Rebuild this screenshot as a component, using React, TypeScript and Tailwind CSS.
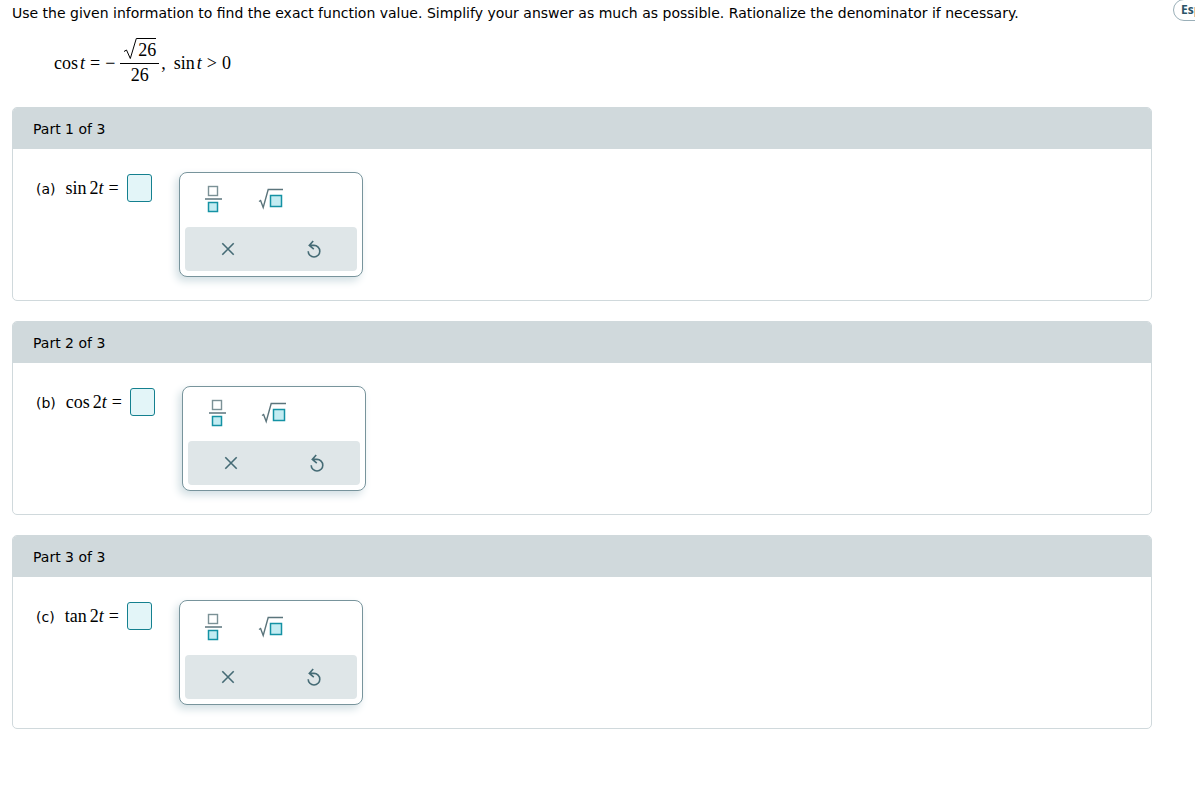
import { useState } from "react";

const parts = [
  { id: "a", fn: "sin" },
  { id: "b", fn: "cos" },
  { id: "c", fn: "tan" },
];

function FractionIcon() {
  return (
    <svg width="18" height="28" viewBox="0 0 18 28" fill="none" aria-hidden="true">
      <rect x="4.5" y="1.5" width="9" height="9" stroke="#7b9196" strokeWidth="1.4" />
      <path d="M1 14H18" stroke="#5b757c" strokeWidth="1.5" />
      <rect x="4.5" y="17.5" width="9" height="9" fill="#c3ecf2" stroke="#1492a4" strokeWidth="1.5" />
    </svg>
  );
}

function RootIcon() {
  return (
    <svg width="26" height="22" viewBox="0 0 26 22" fill="none" aria-hidden="true">
      <path d="M1 13.5L2.6 12.5L5.2 19.5L10.2 1.5H25" stroke="#5b757c" strokeWidth="1.4" />
      <rect x="12.5" y="7.5" width="11" height="11" fill="#c3ecf2" stroke="#1492a4" strokeWidth="1.5" />
    </svg>
  );
}

function ClearIcon() {
  return (
    <svg width="14" height="14" viewBox="0 0 14 14" fill="none" aria-hidden="true">
      <path d="M1.3 1.3L12.7 12.7M12.7 1.3L1.3 12.7" stroke="#456b75" strokeWidth="1.6" />
    </svg>
  );
}

function UndoIcon() {
  return (
    <svg width="14" height="18" viewBox="0 0 14 18" fill="none" aria-hidden="true">
      <path d="M6.2 1L2.3 5.4L6.8 9.2M2.3 5.4H7A5.8 5.8 0 1 1 1.2 11.2" stroke="#456b75" strokeWidth="1.6" />
    </svg>
  );
}

function Given() {
  return (
    <div className="mt-4 flex h-12 items-center pl-[42px] font-['Liberation_Serif',serif] text-[18px] leading-6">
      <span>cos</span>
      <i className="ml-[2px]">t</i>
      <span className="ml-[5px]">=</span>
      <span className="ml-[5px]">−</span>
      <span className="ml-[5px] inline-flex flex-col items-center">
        <span className="flex h-[25px] w-[39px] items-end border-b border-black pb-[2px] pl-1">
          <svg width="14" height="23" viewBox="0 0 14 23" fill="none" aria-hidden="true">
            <path d="M0 13.5L2.5 12L6.3 20.5L12.3 .5H14" stroke="#000" />
          </svg>
          <span className="h-[23px] border-t border-black leading-[22px]">26</span>
        </span>
        <span className="h-6 leading-[22px]">26</span>
      </span>
      <span className="ml-[2px]">,</span>
      <span className="ml-2">sin</span>
      <i className="ml-[2px]">t</i>
      <span className="ml-[5px]">&gt;</span>
      <span className="ml-[5px]">0</span>
    </div>
  );
}

function Part({ index, id, fn }: { index: number; id: string; fn: string }) {
  const [value, setValue] = useState("");
  const field = `answer-${id}`;
  return (
    <section className="overflow-hidden rounded-[5px] border border-[#d0d9dc] bg-white">
      <h2 className="bg-[#d0d9dc] px-5 pt-[11px] pb-[10px] text-sm leading-5">
        Part {index} of {parts.length}
      </h2>
      <div className="flex items-start px-[23px] py-[23px]">
        <label htmlFor={field} className="mt-[6px] flex items-baseline leading-5">
          <span className="text-sm leading-5">({id})</span>
          <span className="ml-[10px] flex items-baseline font-['Liberation_Serif',serif] text-[18px] leading-5">
            <span>{fn}</span>
            <span className="ml-[3px]">2</span>
            <i>t</i>
            <span className="ml-[5px]">=</span>
          </span>
        </label>
        <input
          id={field}
          value={value}
          onChange={(e) => setValue(e.target.value)}
          className="mt-[2px] ml-2 h-7 w-[25px] rounded-[3px] border border-[#14808f] bg-[#e3f5f8] text-center text-sm outline-none"
        />
        <div className="ml-[27px] w-[184px] rounded-lg border border-[#78949c] bg-white p-[5px] shadow-[-3px_4px_8px_#d2dfe3]">
          <div className="grid h-[49px] grid-cols-3 pb-[7px]">
            <button type="button" aria-label="Fraction" className="flex items-center justify-center" onClick={() => setValue(value + "/")}>
              <FractionIcon />
            </button>
            <button type="button" aria-label="Square root" className="flex items-center justify-center" onClick={() => setValue(value + "√")}>
              <RootIcon />
            </button>
          </div>
          <div className="grid h-11 grid-cols-2 rounded-[4px] bg-[#dfe6e8]">
            <button type="button" aria-label="Clear" className="flex items-center justify-center" onClick={() => setValue("")}>
              <ClearIcon />
            </button>
            <button type="button" aria-label="Undo" className="flex items-center justify-center" onClick={() => setValue(value.slice(0, -1))}>
              <UndoIcon />
            </button>
          </div>
        </div>
      </div>
    </section>
  );
}

export default function App() {
  return (
    <div className="flex min-h-screen bg-white font-['DejaVu_Sans',sans-serif] text-black">
      <main className="min-w-0 flex-1 pb-8 pl-3">
        <p className="pt-[3px] text-sm leading-5">
          Use the given information to find the exact function value. Simplify your answer as much as possible. Rationalize the denominator if necessary.
        </p>
        <Given />
        <div className="mt-5 flex flex-col gap-5">
          {parts.map((p, i) => (
            <Part key={p.id} index={i + 1} id={p.id} fn={p.fn} />
          ))}
        </div>
      </main>
      <aside className="w-[43px] shrink-0 overflow-hidden pl-[21px]">
        <button type="button" className="-mt-px block h-[22px] rounded-full border border-[#9aafb8] px-[7px] font-['Open_Sans',sans-serif] text-xs font-bold text-[#2b5468]">
          Español
        </button>
      </aside>
    </div>
  );
}
